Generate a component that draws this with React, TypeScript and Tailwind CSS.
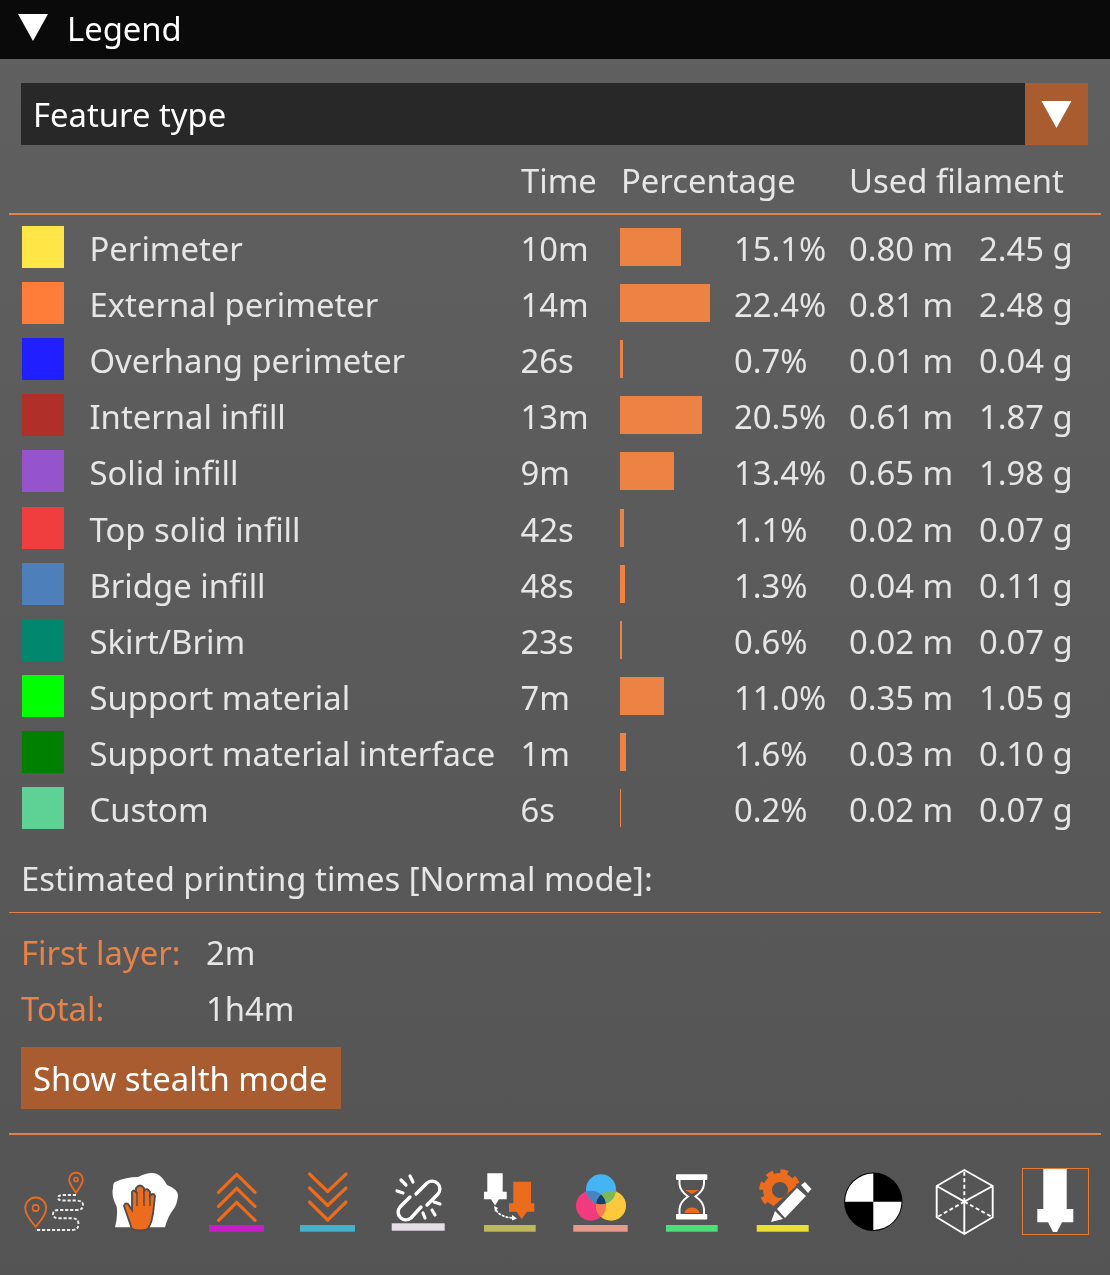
import React from 'react';

const ORANGE = '#ed6b1c';

const rows = [
  { name: 'Perimeter', color: '#ffe646', time: '10m', pct: 15.1, m: '0.80 m', g: '2.45 g' },
  { name: 'External perimeter', color: '#ff7d38', time: '14m', pct: 22.4, m: '0.81 m', g: '2.48 g' },
  { name: 'Overhang perimeter', color: '#1f1fff', time: '26s', pct: 0.7, m: '0.01 m', g: '0.04 g' },
  { name: 'Internal infill', color: '#b03029', time: '13m', pct: 20.5, m: '0.61 m', g: '1.87 g' },
  { name: 'Solid infill', color: '#9654cc', time: '9m', pct: 13.4, m: '0.65 m', g: '1.98 g' },
  { name: 'Top solid infill', color: '#f03e3e', time: '42s', pct: 1.1, m: '0.02 m', g: '0.07 g' },
  { name: 'Bridge infill', color: '#4d80ba', time: '48s', pct: 1.3, m: '0.04 m', g: '0.11 g' },
  { name: 'Skirt/Brim', color: '#00876e', time: '23s', pct: 0.6, m: '0.02 m', g: '0.07 g' },
  { name: 'Support material', color: '#00ff00', time: '7m', pct: 11.0, m: '0.35 m', g: '1.05 g' },
  { name: 'Support material interface', color: '#008000', time: '1m', pct: 1.6, m: '0.03 m', g: '0.10 g' },
  { name: 'Custom', color: '#5ed195', time: '6s', pct: 0.2, m: '0.02 m', g: '0.07 g' },
];

const ROW_COLS = 'grid grid-cols-[68px_431px_100px_114px_115px_129px_1fr] items-center';

function Triangle({ className }: { className: string }) {
  return (
    <svg className={className} viewBox="0 0 30 27">
      <path d="M0 0H30L15 27Z" fill="#fff" />
    </svg>
  );
}

function Icon({ children, selected }: { children: React.ReactNode; selected?: boolean }) {
  return (
    <div className={`h-[67px] w-[67px] ${selected ? 'border-[1.5px] border-[#e97a34]' : ''}`}>
      <svg viewBox="0 0 67 67" className={selected ? '-m-[1.5px] h-[67px] w-[67px]' : 'h-[67px] w-[67px]'} fill="none">
        {children}
      </svg>
    </div>
  );
}

const Pin = ({ x, y, r, tip }: { x: number; y: number; r: number; tip: number }) => (
  <>
    <path
      d={`M${x} ${tip}C${x - r * 0.4} ${y + r * 1.3} ${x - r} ${y + r * 0.7} ${x - r} ${y}A${r} ${r} 0 0 1 ${x + r} ${y}C${x + r} ${y + r * 0.7} ${x + r * 0.4} ${y + r * 1.3} ${x} ${tip}Z`}
      stroke={ORANGE}
      strokeWidth="1.8"
    />
    <circle cx={x} cy={y} r={r * 0.3} stroke={ORANGE} strokeWidth="1.6" />
  </>
);

function Toolbar() {
  return (
    <div className="mt-[33px] flex gap-[24px] pl-[21px]">
      {/* travel */}
      <Icon>
        <Pin x={14.7} y={40} r={10.5} tip={58.7} />
        <Pin x={55} y={11.5} r={6.8} tip={24.7} />
        <path
          d="M55 27H42Q37 27 37 30Q37 32.5 42 32.5H56Q62 33 62 37Q62 42 56 42H38Q32 42 32 46Q32 50.3 38 50.3H52Q57.5 50.5 57.5 56Q57.5 62 51 62H14"
          stroke="#eee"
          strokeWidth="1.9"
          strokeDasharray="3.2 1.8"
        />
      </Icon>
      {/* hand on a blob */}
      <Icon>
        <path
          d="M3 14Q14 9 26 9Q38 3 45 6Q51 9 55 17Q66 21 66 28Q65 37 61 42Q56 48 53 59.3H3Q6 48 4.7 38.7Q-1 28 1 20Q1 15 3 14Z"
          fill="#fff"
        />
        <path
          d="M20 61L12 38Q13 34 16 36L20 42V24Q22 21 24 24V20Q28 15 32 20V23Q35 19 38 24V28Q41 24 43 28L41 46Q40 54 36 61Q28 64 20 61Z"
          fill={ORANGE}
          stroke="#4b4b4b"
          strokeWidth="1.8"
        />
        <path d="M25 24V38M32 22V38M38 26V38" stroke="#4b4b4b" strokeWidth="1.4" />
      </Icon>
      {/* extrusion up */}
      <Icon>
        <path
          d="M15.5 24.3L33.7 6.3L52 24.3M15.5 38.3L33.7 20.3L52 38.3M15.5 52.3L33.7 34.3L52 52.3"
          stroke={ORANGE}
          strokeWidth="3.2"
          strokeLinecap="round"
          strokeLinejoin="round"
        />
        <rect x="6" y="57" width="55" height="6.7" fill="#c91dc9" />
      </Icon>
      {/* extrusion down */}
      <Icon>
        <path
          d="M15.5 6L33.7 23.5L52 6M15.5 20L33.7 37.5L52 20M15.5 34L33.7 52L52 34"
          stroke={ORANGE}
          strokeWidth="3.2"
          strokeLinecap="round"
          strokeLinejoin="round"
        />
        <rect x="6" y="57" width="55" height="6.7" fill="#44b0cc" />
      </Icon>
      {/* unretract / broken link */}
      <Icon>
        <path
          d="M31 26L42 15A7.8 7.8 0 0 1 53 26L42 37M25 29L15 39A7.8 7.8 0 0 0 26 50L36 39"
          stroke="#fff"
          strokeWidth="3.4"
          strokeLinecap="round"
        />
        <path
          d="M16 12L21 17M25 8L28 14M12 23L18 25M49 34L55 36M47 42L50 47M38 45L40 50"
          stroke="#fff"
          strokeWidth="3.2"
          strokeLinecap="round"
        />
        <rect x="6.7" y="55.3" width="53" height="7.4" fill="#e5dfe5" />
      </Icon>
      {/* tool change */}
      <Icon>
        <path d="M11.3 5.3H26.7V23.7H30.7V31.3H23L19 37.5L15 31.3H8V23.7H11.3Z" fill="#fff" />
        <path d="M37.3 13.7H55V35.3H58.3V43.7H51L45.7 51.3L40.5 43.7H33V35.3H37.3Z" fill={ORANGE} />
        <path d="M20 42Q24 49 37 50" stroke="#fff" strokeWidth="1.6" strokeDasharray="3 1" />
        <path d="M18 38L22 40L19 44ZM36 47L41 50.5L36 52.5Z" fill="#fff" />
        <rect x="8" y="57" width="51.7" height="6.7" fill="#bdb85a" />
      </Icon>
      {/* color change */}
      <Icon>
        <defs>
          <clipPath id="cp">
            <circle cx="24" cy="37.7" r="15" />
          </clipPath>
          <clipPath id="cy">
            <circle cx="44" cy="37.7" r="15" />
          </clipPath>
        </defs>
        <circle cx="24" cy="37.7" r="15" fill="#f23b7e" />
        <circle cx="44" cy="37.7" r="15" fill="#fdc93c" />
        <circle cx="34" cy="21.3" r="15" fill="#44b4f5" />
        <g clipPath="url(#cp)">
          <circle cx="44" cy="37.7" r="15" fill="#ff7a50" />
          <circle cx="34" cy="21.3" r="15" fill="#4a84c0" />
        </g>
        <g clipPath="url(#cy)">
          <circle cx="34" cy="21.3" r="15" fill="#7cb857" />
          <g clipPath="url(#cp)">
            <circle cx="34" cy="21.3" r="15" fill="#12426b" />
          </g>
        </g>
        <rect x="6.3" y="57" width="54.4" height="6.7" fill="#e59b8c" />
      </Icon>
      {/* pause */}
      <Icon>
        <rect x="18" y="6.3" width="31.3" height="5.7" rx="1" fill="#fff" />
        <rect x="18" y="46" width="31.3" height="5.5" rx="1" fill="#fff" />
        <path
          d="M21.5 12V16Q22 23 30 28.5Q22 34 21.5 41V46M46 12V16Q45.5 23 37.5 28.5Q45.5 34 46 41V46"
          stroke="#fff"
          strokeWidth="2"
        />
        <path d="M27 22H41L34 26Z" fill={ORANGE} />
        <path d="M26.5 45Q28 39.5 34 39.5Q40 39.5 41.5 45Z" fill={ORANGE} />
        <rect x="8" y="57" width="51.7" height="6.7" fill="#4ee078" />
      </Icon>
      {/* custom gcode */}
      <Icon>
        <circle cx="31" cy="22" r="12.5" stroke={ORANGE} strokeWidth="9" />
        <circle cx="31" cy="22" r="18.5" stroke={ORANGE} strokeWidth="4.5" strokeDasharray="7.5 7" />
        <path d="M60 20L24 52" stroke="#545454" strokeWidth="20" />
        <path d="M48 20L57 28L36 50L28 41Z" fill="#fff" />
        <path d="M26 43L34 51L22 54Z" fill="#fff" />
        <path d="M52 17L56 14L62.5 21L59 25Z" fill="#fff" />
        <rect x="7.7" y="57" width="52" height="6.7" fill="#ecdf33" />
      </Icon>
      {/* sequence / center of gravity */}
      <Icon>
        <circle cx="33.3" cy="33.7" r="29.2" fill="#000" />
        <path d="M33.3 33.7V5.5A28.2 28.2 0 0 0 5.1 33.7ZM33.3 33.7V61.9A28.2 28.2 0 0 0 61.5 33.7Z" fill="#fff" />
      </Icon>
      {/* shells cube */}
      <Icon>
        <path
          d="M33.3 2L61.7 18V49.3L33.3 66L5.7 49.3V18ZM5.7 18L33.3 33.7L61.7 18M33.3 33.7V66"
          stroke="#fff"
          strokeWidth="1.9"
          strokeLinejoin="round"
        />
        <path d="M33.3 33.7V2M33.3 33.7L5.7 49.3M33.3 33.7L61.7 49.3" stroke="#fff" strokeWidth="1.9" strokeDasharray="4 2.5" />
      </Icon>
      {/* tool position, active */}
      <Icon selected>
        <path d="M21.3 2H44.7V42H51.3V55.3H40L35 65H31L26 55.3H15.3V42H21.3Z" fill="#fff" />
      </Icon>
    </div>
  );
}

export default function App() {
  return (
    <div className="h-[1275px] w-[1110px] overflow-hidden bg-gradient-to-b from-[#606060] to-[#545454] font-['Noto_Sans',sans-serif] text-[32.8px] leading-[42px] text-[#e6e6e6] blur-[0.4px]">
      <div className="flex h-[59px] items-center bg-[#0a0a0a] pl-[18px] text-white">
        <Triangle className="-mt-[4px] h-[27px] w-[30px]" />
        <span className="-mt-[1px] ml-[20px] -translate-x-px">Legend</span>
      </div>

      <div className="mx-[21px] mt-[24px] flex h-[62px] w-[1067px] items-center justify-between bg-[#282828] pl-[12px] text-white">
        <span className="pt-[2px]">Feature type</span>
        <div className="flex h-[62px] w-[63px] items-center justify-center bg-[#a95c2f]">
          <Triangle className="h-[27px] w-[31px]" />
        </div>
      </div>

      <div className={`${ROW_COLS} mt-[15px] h-[42px] pl-[22px]`}>
        <span className="col-start-3">Time</span>
        <span className="whitespace-nowrap">Percentage</span>
        <span className="col-start-6 -ml-px whitespace-nowrap">Used filament</span>
      </div>
      <div className="mx-[9px] mt-[11px] h-[1.5px] bg-[#e0834a]" />

      <div className="mt-[4px] pl-[22px]">
        {rows.map((row) => (
          <div key={row.name} className={`${ROW_COLS} h-[56.2px]`}>
            <div className="h-[42px] w-[42px]" style={{ backgroundColor: row.color }} />
            <span className="-ml-[0.5px] whitespace-nowrap pt-[4px]">{row.name}</span>
            <span className="-ml-[0.5px] pt-[4px]">{row.time}</span>
            <div className="-ml-px h-[38px] bg-[#ec8243]" style={{ width: `${Math.max(row.pct * 4.02, 1)}px` }} />
            <span className="-ml-px pt-[4px]">{row.pct.toFixed(1)}%</span>
            <span className="-ml-px pt-[4px]">{row.m}</span>
            <span className="pt-[4px]">{row.g}</span>
          </div>
        ))}
      </div>

      <div className="mt-[21px] pl-[21px]">Estimated printing times [Normal mode]:</div>
      <div className="mx-[9px] mt-[12px] h-[1.5px] bg-[#e0834a]" />

      <div className="mt-[19px] flex pl-[21px]">
        <span className="w-[185px] text-[#e58348]">First layer:</span>
        <span>2m</span>
      </div>
      <div className="mt-[14px] flex pl-[21px]">
        <span className="w-[185px] text-[#e58348]">Total:</span>
        <span>1h4m</span>
      </div>

      <div className="mt-[17px] ml-[21px] flex h-[62px] w-[320px] items-center bg-[#a95c2f] pl-[12px] text-white">
        <span className="pt-[2px]">Show stealth mode</span>
      </div>
      <div className="mx-[9px] mt-[24px] h-[1.5px] bg-[#e0834a]" />

      <Toolbar />
    </div>
  );
}
